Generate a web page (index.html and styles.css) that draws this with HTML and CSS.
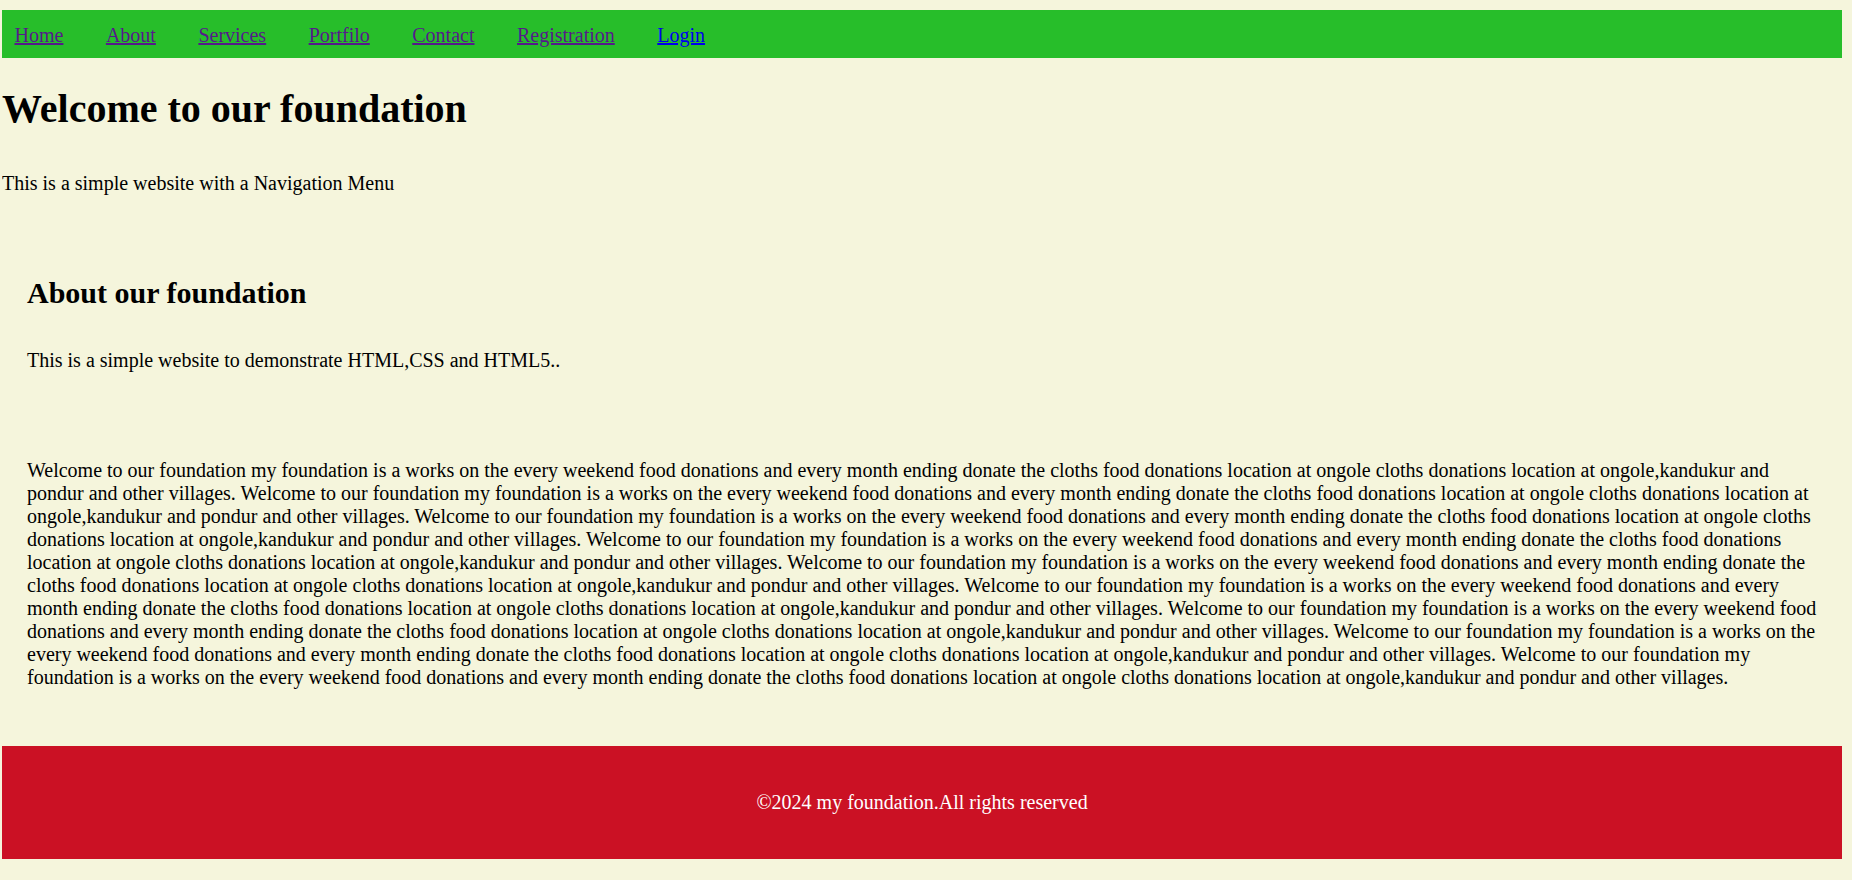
FILE: index.html
```html
<!DOCTYPE html>
<html lang="en">
<head>
<meta charset="utf-8">
<title>My Foundation</title>
<link rel="stylesheet" href="styles.css">
</head>
<body>
<nav class="nav">
  <a class="nav-link visited" href="#">Home</a>
  <a class="nav-link visited" href="#">About</a>
  <a class="nav-link visited" href="#">Services</a>
  <a class="nav-link visited" href="#">Portfilo</a>
  <a class="nav-link visited" href="#">Contact</a>
  <a class="nav-link visited" href="#">Registration</a>
  <a class="nav-link" href="#">Login</a>
</nav>
<h1 class="title">Welcome to our foundation</h1>
<p class="intro">This is a simple website with a Navigation Menu</p>
<section class="about">
  <h2 class="about-title">About our foundation</h2>
  <p class="about-text">This is a simple website to demonstrate HTML,CSS and HTML5..</p>
</section>
<section class="story">
  <p class="story-text">Welcome to our foundation my foundation is a works on the every weekend food donations and every month ending donate the cloths food donations location at ongole cloths donations location at ongole,kandukur and pondur and other villages. Welcome to our foundation my foundation is a works on the every weekend food donations and every month ending donate the cloths food donations location at ongole cloths donations location at ongole,kandukur and pondur and other villages. Welcome to our foundation my foundation is a works on the every weekend food donations and every month ending donate the cloths food donations location at ongole cloths donations location at ongole,kandukur and pondur and other villages. Welcome to our foundation my foundation is a works on the every weekend food donations and every month ending donate the cloths food donations location at ongole cloths donations location at ongole,kandukur and pondur and other villages. Welcome to our foundation my foundation is a works on the every weekend food donations and every month ending donate the cloths food donations location at ongole cloths donations location at ongole,kandukur and pondur and other villages. Welcome to our foundation my foundation is a works on the every weekend food donations and every month ending donate the cloths food donations location at ongole cloths donations location at ongole,kandukur and pondur and other villages. Welcome to our foundation my foundation is a works on the every weekend food donations and every month ending donate the cloths food donations location at ongole cloths donations location at ongole,kandukur and pondur and other villages. Welcome to our foundation my foundation is a works on the every weekend food donations and every month ending donate the cloths food donations location at ongole cloths donations location at ongole,kandukur and pondur and other villages. Welcome to our foundation my foundation is a works on the every weekend food donations and every month ending donate the cloths food donations location at ongole cloths donations location at ongole,kandukur and pondur and other villages.</p>
</section>
<footer class="footer">
  <p class="footer-text">&copy;2024 my foundation.All rights reserved</p>
</footer>
</body>
</html>
```

FILE: styles.css
```css
html {
  background: #f5f5dc;
}

body {
  margin: 10px 10px 21px 2px;
  background: #f5f5dc;
  font-family: "Liberation Serif", "Times New Roman", serif;
  font-size: 20px;
  color: #000;
}

.nav {
  display: flex;
  align-items: center;
  gap: 42.5px;
  height: 48px;
  box-sizing: border-box;
  padding: 2px 0 0 12.5px;
  background: #27be2a;
}

.nav-link {
  color: #0000ee;
  text-decoration: underline;
  font-size: 20px;
}

.nav-link.visited {
  color: #551a8b;
}

.title {
  font-size: 40px;
  font-weight: bold;
  margin: 27px 0 0;
}

.intro {
  margin: 40px 0 32px;
}

.about {
  padding: 25px;
}

.about-title {
  font-size: 30px;
  font-weight: bold;
  margin: 24px 0 39px;
}

.about-text {
  margin: 0 0 20px;
}

.story {
  padding: 25px;
}

.story-text {
  margin: 17px 0 20px;
}

.footer {
  margin-top: 12px;
  padding: 25px;
  background: #cb1124;
  color: #fff;
  text-align: center;
}

.footer-text {
  margin: 20px 0;
}
```
